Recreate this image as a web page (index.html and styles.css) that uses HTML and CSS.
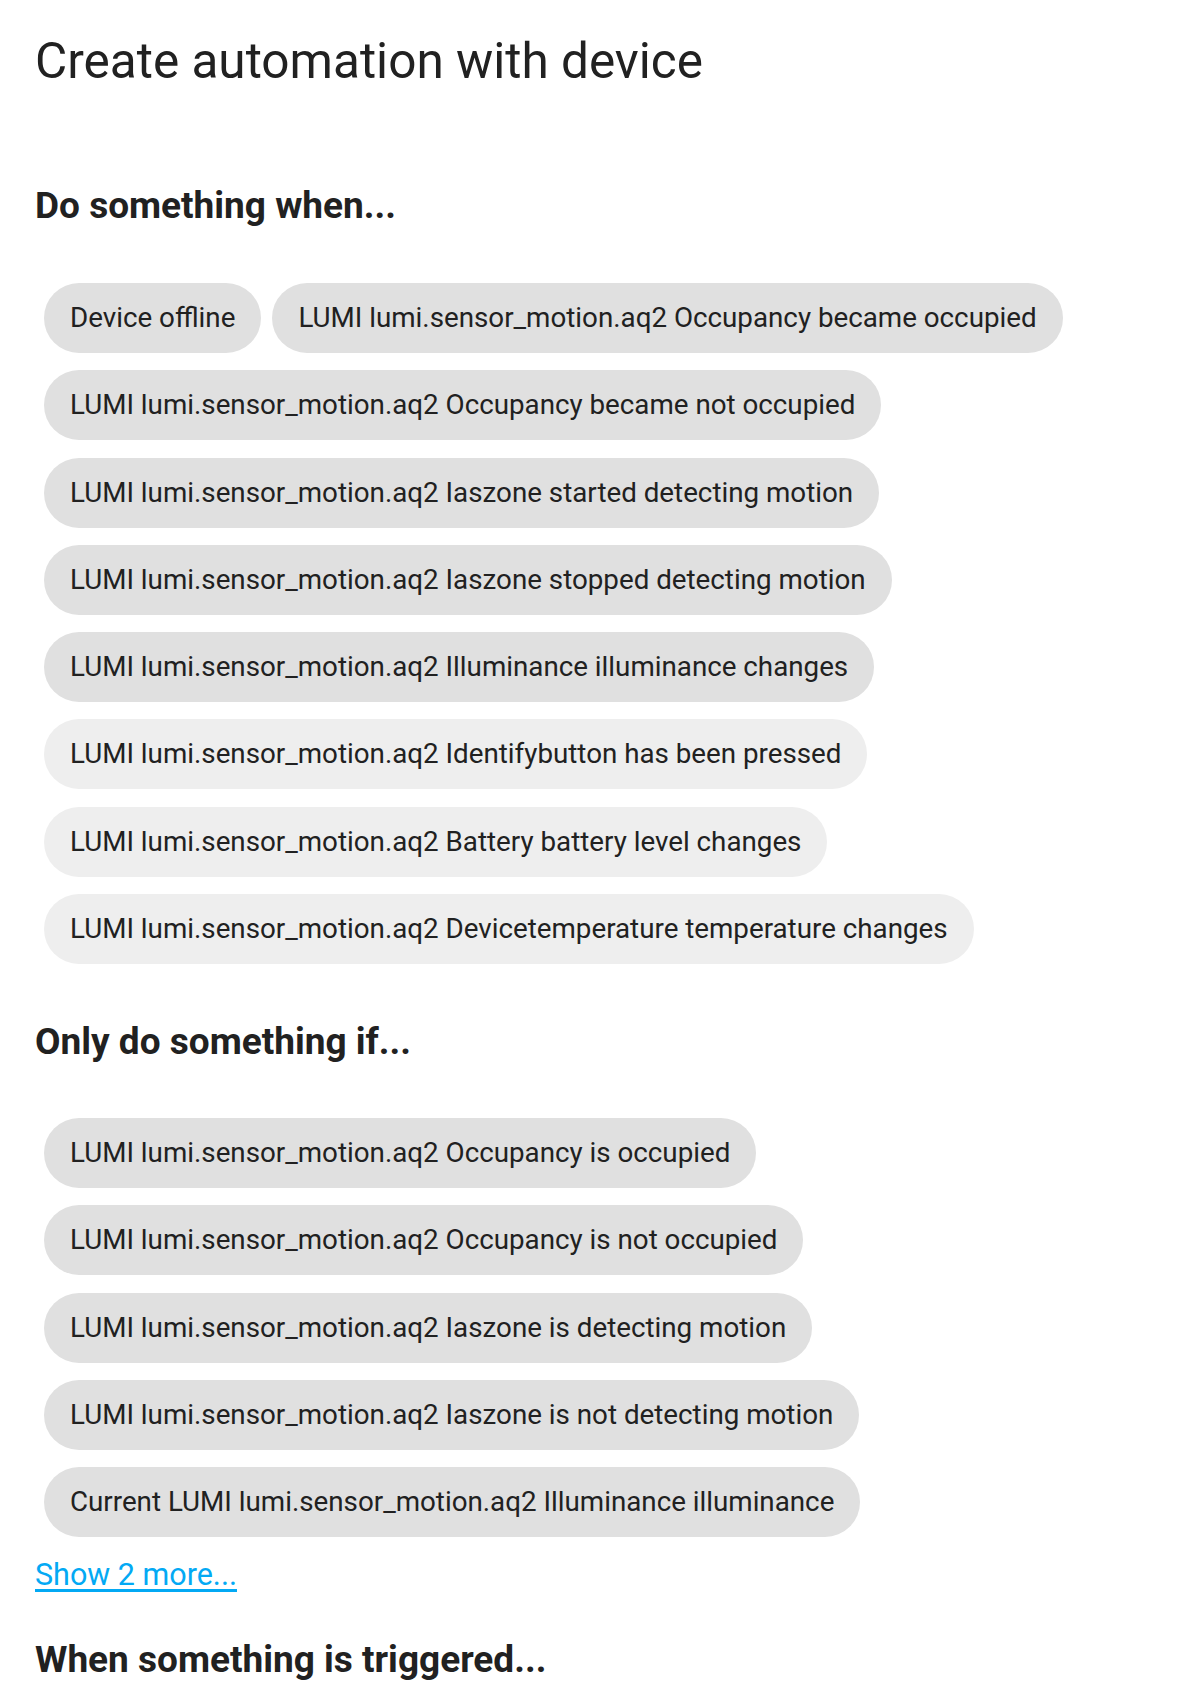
FILE: index.html
```html
<!DOCTYPE html>
<html>
<head>
<meta charset="utf-8">
<link rel="stylesheet" href="styles.css">
</head>
<body>
<div class="page">
  <h1 class="title">Create automation with device</h1>

  <h2 class="section-title first">Do something when...</h2>
  <div class="chips">
    <span class="chip">Device offline</span>
    <span class="chip">LUMI lumi.sensor_motion.aq2 Occupancy became occupied</span>
    <span class="chip">LUMI lumi.sensor_motion.aq2 Occupancy became not occupied</span>
    <span class="chip">LUMI lumi.sensor_motion.aq2 Iaszone started detecting motion</span>
    <span class="chip">LUMI lumi.sensor_motion.aq2 Iaszone stopped detecting motion</span>
    <span class="chip">LUMI lumi.sensor_motion.aq2 Illuminance illuminance changes</span>
    <span class="chip light">LUMI lumi.sensor_motion.aq2 Identifybutton has been pressed</span>
    <span class="chip light">LUMI lumi.sensor_motion.aq2 Battery battery level changes</span>
    <span class="chip light">LUMI lumi.sensor_motion.aq2 Devicetemperature temperature changes</span>
  </div>

  <h2 class="section-title">Only do something if...</h2>
  <div class="chips conditions">
    <span class="chip">LUMI lumi.sensor_motion.aq2 Occupancy is occupied</span>
    <span class="chip">LUMI lumi.sensor_motion.aq2 Occupancy is not occupied</span>
    <span class="chip">LUMI lumi.sensor_motion.aq2 Iaszone is detecting motion</span>
    <span class="chip">LUMI lumi.sensor_motion.aq2 Iaszone is not detecting motion</span>
    <span class="chip">Current LUMI lumi.sensor_motion.aq2 Illuminance illuminance</span>
  </div>
  <a class="more" href="#">Show 2 more...</a>

  <h2 class="section-title last">When something is triggered...</h2>
</div>
</body>
</html>
```

FILE: styles.css
```css
html, body {
  margin: 0;
  padding: 0;
  background: #ffffff;
}

.page {
  padding: 33px 0 0 35px;
  font-family: Roboto, "Liberation Sans", sans-serif;
  color: #212121;
  width: 1140px;
}

.title {
  margin: 0;
  font-size: 49.5px;
  line-height: 56px;
  font-weight: 400;
}

.section-title {
  margin: 57px 0 0 0;
  font-size: 37px;
  line-height: 42px;
  font-weight: 700;
}

.section-title.first {
  margin-top: 96px;
}

.section-title.last {
  margin-top: 45px;
}

.chips {
  display: flex;
  flex-wrap: wrap;
  align-items: flex-start;
  gap: 17.3px 11px;
  margin: 56px 0 0 9px;
  max-width: 1120px;
}

.chips.conditions {
  margin-top: 55px;
}

.chip {
  display: inline-block;
  height: 70px;
  line-height: 70px;
  padding: 0 26px;
  border-radius: 35px;
  background: #e0e0e0;
  font-size: 27.75px;
  white-space: nowrap;
}

.chip.light {
  background: #eeeeee;
}

.more {
  display: inline-block;
  margin-top: 19px;
  font-size: 30.5px;
  line-height: 38px;
  color: #03a9f4;
  text-decoration: underline;
  text-underline-offset: 4px;
}
```
